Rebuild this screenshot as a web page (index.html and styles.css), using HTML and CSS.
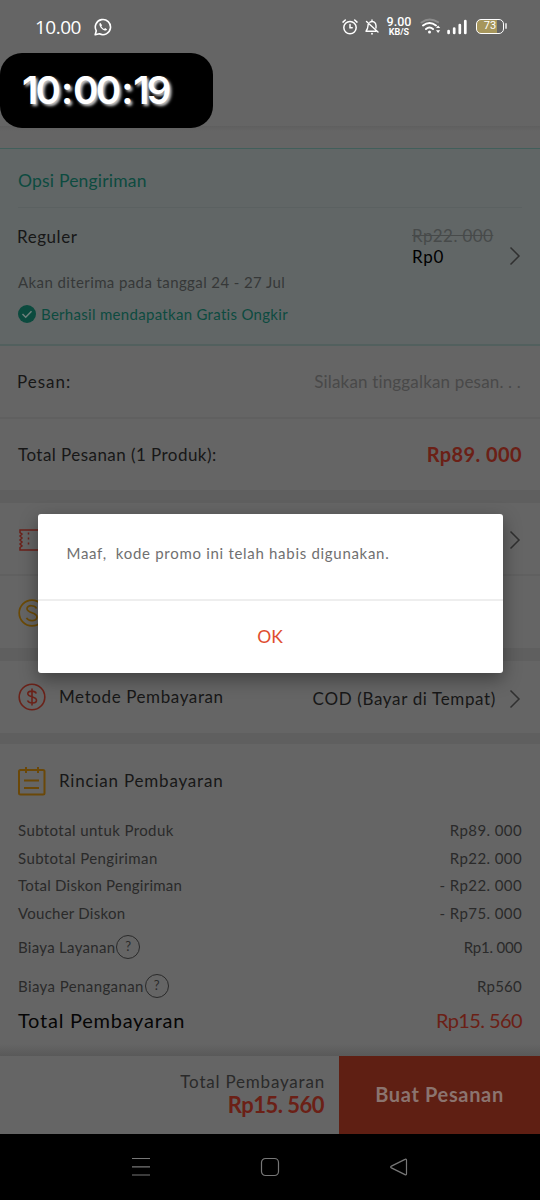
FILE: index.html
```html
<!DOCTYPE html>
<html lang="id">
<head>
<meta charset="utf-8">
<title>Checkout</title>
<link rel="stylesheet" href="styles.css">
</head>
<body>
<div class="screen">
  <header class="header">
    <div class="status">
      <span class="status-time">10.00</span>
      <svg class="wa" width="18" height="18" viewBox="0 0 18 18"><path d="M1.2 16.8l1.1-4A7.6 7.6 0 1 1 5.400 15.800z" fill="none" stroke="#fff" stroke-width="1.6" stroke-linejoin="round"/><path d="M6.300 4.800c-.9.5-1.100 1.500-.7 2.600.9 2.400 2.600 4.100 5 5 1.100.4 2.100.1 2.500-.9l-1.900-1.500-1.200.9c-1.200-.5-2.200-1.500-2.700-2.700l.8-1z" fill="#fff"/></svg>
      <div class="status-icons">
        <svg width="16" height="16" viewBox="0 0 16 16" fill="none" stroke="#fff" stroke-width="1.500" stroke-linecap="round"><circle cx="8" cy="8.600" r="6.200"/><path d="M8 5.500v3.300h2.200M1 3.100L3.300 1M15 3.100L12.700 1"/></svg>
        <svg class="bell" width="14" height="16" viewBox="0 0 14 16" fill="none" stroke="#fff" stroke-width="1.400" stroke-linecap="round" stroke-linejoin="round"><path d="M7 1v1M4.800 3.300C7.500 1.400 11 3.200 11 6.500V9M3.100 5.500c-.2 2.700 0 4.200-2.100 6.700h10M1.500 2.500l11.500 10.500"/><path d="M7 14.600v.2" stroke-width="1.800"/></svg>
        <div class="speed"><b>9.00</b><small>KB/S</small></div>
        <svg class="wifi" width="22" height="18" viewBox="0 0 22 18" fill="none" stroke="#fff" stroke-linecap="round"><path d="M1.500 4.500Q9.500-1.500 18 4.200" stroke="#8b8b8b" stroke-width="2"/><path d="M3 7.500q6.500-5 13 0M6 11q3.500-3 7 0" stroke-width="2"/><circle cx="9.500" cy="14" r="1.500" fill="#fff" stroke="none"/><path d="M16 10l2.100-2.600 2.100 2.600zM16 12.300l2.100 2.600 2.100-2.600z" fill="#fff" stroke="none"/></svg>
        <svg class="signal" width="20" height="16" viewBox="0 0 20 16" stroke="#fff" stroke-width="2.700" stroke-linecap="round"><path d="M1.600 12v2M7.200 9.500V14M12.800 6V14M18.300 2V14"/></svg>
        <div class="battery"><span>73</span></div>
      </div>
    </div>
    <div class="clock"><span>10<b>:</b>00<b>:</b>19</span></div>
  </header>
  <div class="strip"></div>

  <section class="shipping">
    <h2 class="ship-title">Opsi Pengiriman</h2>
    <div class="ship-main">
      <span class="reguler">Reguler</span>
      <div class="ship-price">
        <span class="old">Rp22. 000</span>
        <span class="black">Rp0</span>
      </div>
      <svg class="chev" width="12" height="20" viewBox="0 0 12 20"><path d="M1.500 1.500L10 10l-8.500 8.500"/></svg>
    </div>
    <div class="eta">Akan diterima pada tanggal 24 - 27 Jul</div>
    <div class="gratis">
      <svg width="18" height="18" viewBox="0 0 18 18"><circle cx="9" cy="9" r="9" fill="#0b4a3e"/><path d="M4.500 9l3.200 3.200 5.800-5.900" fill="none" stroke="#70807d" stroke-width="1.500"/></svg>
      <span>Berhasil mendapatkan Gratis Ongkir</span>
    </div>
  </section>

  <section class="row line"><span class="pesan">Pesan:</span><span class="hint">Silakan tinggalkan pesan. . .</span></section>
  <section class="row total"><span class="total-label">Total Pesanan (1 Produk):</span><span class="total-price">Rp89. 000</span></section>
  <div class="gap"></div>
  <section class="row line voucher">
    <svg width="28" height="22" viewBox="0 0 28 22" fill="none" stroke="#6b211a" stroke-width="1.500"><path d="M27 1H2v2.500l2 1.500-2 2 2 2-2 2 2 2-2 2 2 2-2 1.500V21h25"/><path d="M10.500 3.500v15" stroke-dasharray="2 3"/></svg>
    <svg class="chev" width="12" height="20" viewBox="0 0 12 20"><path d="M1.500 1.500L10 10l-8.500 8.500"/></svg>
  </section>
  <section class="row coins"><svg width="28" height="28" viewBox="0 0 28 28" fill="none" stroke="#6b4a06" stroke-width="1.700"><circle cx="14" cy="14" r="12.800"/><path d="M18.500 9.500C17 6 9 5.500 9 9.800s10 3.700 10 8.200-8.500 4.700-10.500.9"/></svg></section>
  <div class="gap"></div>
  <section class="row method">
    <svg width="28" height="28" viewBox="0 0 28 28" fill="none" stroke="#6b2219" stroke-width="1.600"><circle cx="14" cy="14" r="12.800"/><path d="M18.300 10.500C17 7.500 9.800 7.200 9.800 10.700s8.700 2.800 8.700 6.500-7.500 3.600-9 .3M14 5.500v17"/></svg>
    <span class="method-label">Metode Pembayaran</span>
    <span class="method-val">COD (Bayar di Tempat)</span>
    <svg class="chev" width="12" height="20" viewBox="0 0 12 20"><path d="M1.500 1.500L10 10l-8.500 8.500"/></svg>
  </section>
  <div class="gap slim"></div>

  <section class="details">
    <div class="details-head">
      <svg width="28" height="30" viewBox="0 0 28 30" fill="none" stroke="#6b4808" stroke-width="2"><rect x="1" y="4" width="25.500" height="24.500" rx="1.500"/><path d="M8 1v6M20 1v6M6 14.500h15M6 22h15"/></svg>
      <span>Rincian Pembayaran</span>
    </div>
    <div class="item"><span>Subtotal untuk Produk</span><span>Rp89. 000</span></div>
    <div class="item"><span>Subtotal Pengiriman</span><span>Rp22. 000</span></div>
    <div class="item"><span class="tight">Total Diskon Pengiriman</span><span>- Rp22. 000</span></div>
    <div class="item"><span class="tight">Voucher Diskon</span><span>- Rp75. 000</span></div>
    <div class="item fee"><span class="fee-name">Biaya Layanan</span><i class="help">?</i><span class="narrow">Rp1. 000</span></div>
    <div class="item fee"><span>Biaya Penanganan</span><i class="help">?</i><span class="tight">Rp560</span></div>
    <div class="item grand"><span>Total Pembayaran</span><span class="red">Rp15. 560</span></div>
  </section>

  <footer class="checkout">
    <div class="sum"><span class="sum-label">Total Pembayaran</span><span class="sum-price">Rp15. 560</span></div>
    <div class="buy">Buat Pesanan</div>
  </footer>
  <nav class="nav">
    <svg width="20" height="20" viewBox="0 0 20 20"><path d="M1 1.500h18M1 9.800h18M1 18h18"/></svg>
    <svg width="20" height="20" viewBox="0 0 20 20"><rect x="1.500" y="1.500" width="17" height="17" rx="4"/></svg>
    <svg width="20" height="20" viewBox="0 0 20 20"><path d="M17.500 3.300v13.400q0 1.700-1.500.9L2.400 10.900q-1.500-.9 0-1.800L16 2.400q1.500-.8 1.500.9z"/></svg>
  </nav>

  <div class="modal" role="dialog">
    <div class="modal-text">Maaf,&nbsp; kode promo ini telah habis digunakan.</div>
    <div class="modal-ok">OK</div>
  </div>
</div>
</body>
</html>
```
FILE: styles.css
```css
* { box-sizing: border-box; }
body { margin: 0; background: #656565; font-family: Lato, "Open Sans", sans-serif; color: #171717; }
.screen { position: relative; width: 540px; height: 1200px; overflow: hidden; background: #656565; }
span { white-space: pre; }
svg { display: block; flex: none; }

/* status bar and floating clock */
.header { height: 126px; }
.status { height: 53px; display: flex; align-items: center; padding: 0 36px 0 35px; color: #fff; }
.status-time { width: 46px; font: 19px "Open Sans", sans-serif; letter-spacing: -.5px; }
.wa { margin-left: 13px; }
.status-icons { margin-left: auto; display: flex; align-items: center; }
.bell { margin-left: 7px; }
.speed { margin-left: 7px; width: 26px; text-align: center; font-family: Roboto, sans-serif; line-height: 10px; }
.speed b { display: block; font-size: 12.500px; font-weight: 500; }
.speed small { display: block; font-size: 9px; font-weight: 700; }
.wifi { margin-left: 8px; }
.signal { margin-left: 5px; }
.battery { position: relative; margin-left: 9px; width: 28px; height: 15px; border: 1.500px solid #fff; border-radius: 5px; font: 11px/12px Roboto, sans-serif; text-align: center; background: linear-gradient(90deg, #a6965c 78%, #656565 78%); }
.battery::after { content: ""; position: absolute; right: -4px; top: 3px; width: 2px; height: 6px; border-radius: 1px; background: #ccc; }
.battery span { display: block; }
.clock { position: absolute; left: 0; top: 53px; width: 213px; height: 75px; border-radius: 22px; background: #000; color: #fff; font: 600 38.500px/74px Inter, sans-serif; letter-spacing: -2.800px; padding-left: 22px; text-shadow: 2px 2px 3px #ccc; }
.clock b { font-weight: inherit; margin: 0 2.500px 0 3px; }
.strip { height: 22px; background: linear-gradient(#5f5f5f, #656565 5px); }

/* shipping option */
.shipping { height: 198px; border-top: 1px solid #415f5b; border-bottom: 2px solid #52605e; background: #616666; padding: 0 18px; }
.ship-title { margin: 0; height: 59px; border-bottom: 1px solid #5b6161; font-size: 17.500px; font-weight: 400; line-height: 64px; letter-spacing: .2px; color: #0d4b40; }
.ship-main { display: flex; height: 62px; padding-top: 17px; font-size: 17px; line-height: 24px; }
.reguler { margin-left: -1px; letter-spacing: .55px; }
.ship-price { margin-left: auto; width: 110px; display: flex; flex-direction: column; align-items: flex-start; line-height: 21px; }
.old { color: #474a4a; text-decoration: line-through; letter-spacing: .4px; }
.black { color: #000; letter-spacing: .7px; }
.chev { fill: none; stroke: #303030; stroke-width: 1.500; margin-right: 1px; }
.ship-main .chev { margin: 21px 1px 0 -13px; }
.eta { height: 26px; font-size: 15px; line-height: 25px; letter-spacing: .4px; color: #363838; }
.gratis { display: flex; align-items: center; gap: 5px; height: 36px; font-size: 15px; letter-spacing: .3px; color: #0d4b40; }

/* order rows */
.row { display: flex; align-items: center; justify-content: space-between; height: 72px; padding: 0 18px; font-size: 17px; }
.line { height: 73px; border-bottom: 2px solid #606060; }
.total { height: 71px; }
.pesan { margin-left: -1px; letter-spacing: 1px; }
.hint { margin-right: 1px; color: #494949; letter-spacing: .17px; }
.total-label { letter-spacing: .45px; }
.total-price { margin-top: -2px; color: #6b2016; font-size: 20px; font-weight: 700; letter-spacing: .4px; }
.gap { height: 13px; background: #5f5f5f; }
.gap.slim { height: 11px; }
.voucher { padding-top: 2px; }
.coins { padding-top: 2px; }
.method-label { margin: -1px 0 0 13px; letter-spacing: .6px; }
.method-val { margin: 3px 13px 0 auto; letter-spacing: .65px; }
.method .chev { margin-top: 3px; }

/* payment details */
.details { height: 312px; padding: 22px 18px 0; color: #2a2a2a; background: linear-gradient(transparent 300px, #595959 312px); }
.details-head { display: flex; align-items: center; gap: 13px; height: 30px; font-size: 17px; letter-spacing: .8px; color: #171717; margin-bottom: 20px; }
.details-head span { margin-top: -2px; }
.item { display: flex; align-items: center; height: 27.700px; font-size: 15px; letter-spacing: .4px; }
.item span:last-child { margin-left: auto; }
.tight { letter-spacing: .25px; }
.fee-name { letter-spacing: .3px; }
.narrow { letter-spacing: -.2px; }
.help { display: block; width: 24px; height: 24px; margin-left: 1px; border: 1.500px solid #2a2a2a; border-radius: 50%; font-size: 13px; font-style: normal; line-height: 21px; text-align: center; }
.fee { height: 39px; padding-top: 1px; }
.grand { height: 31px; font-size: 20px; letter-spacing: .75px; color: #050505; }
.red { color: #6b2016; letter-spacing: -.6px; }

/* checkout bar */
.checkout { height: 78px; display: flex; }
.sum { width: 339px; padding: 14px 14px 0 0; display: flex; flex-direction: column; align-items: flex-end; line-height: 23px; }
.sum-label { font-size: 17px; letter-spacing: .8px; color: #2a2a2a; }
.sum-price { font-size: 22px; font-weight: 700; letter-spacing: -.5px; margin-right: 1px; color: #6b2016; }
.buy { flex: 1; background: #5f1f13; color: #8b746f; font-size: 20px; font-weight: 700; letter-spacing: .65px; text-align: center; line-height: 77px; }
.nav { height: 66px; background: #000; display: flex; justify-content: space-between; align-items: center; padding: 0 131px; }
.nav svg { fill: none; stroke: #777; stroke-width: 1.200; }

/* dialog over the page */
.modal { position: absolute; left: 37.500px; top: 514px; width: 465px; height: 158.500px; border-radius: 3px; background: #fff; box-shadow: 0 6px 18px rgba(0,0,0,.38); }
.modal-text { height: 87px; border-bottom: 2px solid #eee; padding-left: 29px; font-size: 15px; line-height: 79px; letter-spacing: .7px; color: #707070; }
.modal-ok { text-align: center; font-size: 17.500px; line-height: 71px; color: #e04e30; }
```
